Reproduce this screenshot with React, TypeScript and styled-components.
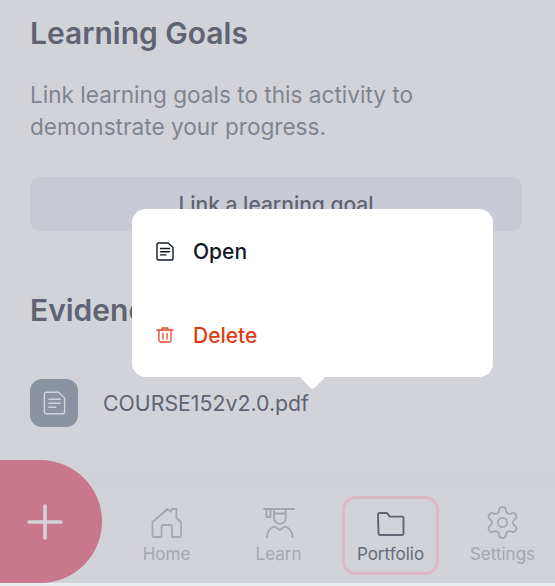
import styled, { createGlobalStyle } from 'styled-components'

const GlobalStyle = createGlobalStyle`
  html, body {
    margin: 0;
    padding: 0;
    background: #e9eef1;
    font-family: Inter, "Noto Sans", sans-serif;
  }
`

const Screen = styled.div`
  position: relative;
  width: 555px;
  height: 586px;
  overflow: hidden;
  background: #e9eef1;
`

const Dimmed = styled.div`
  height: 583px;
  display: flex;
  flex-direction: column;
  background: linear-gradient(#d2d3d9 0, #d2d3d9 450px, #cfd0d5 487px, #d2d3d9 488px);
`

const Content = styled.main`
  flex: 1;
  padding: 14px 33px 0 30px;
`

const Heading = styled.h2`
  margin: 0;
  font-size: 30px;
  line-height: 38px;
  font-weight: 600;
  color: #5f6372;
`

const Intro = styled.p`
  margin: 27px 0 0;
  font-size: 22.6px;
  line-height: 32px;
  color: #80848f;
`

const LinkButton = styled.div`
  margin-top: 34px;
  height: 54px;
  display: flex;
  align-items: center;
  justify-content: center;
  border-radius: 10px;
  background: #c9cbd4;
  font-size: 21px;
  font-weight: 500;
  color: #5f6372;
`

const EvidenceHeading = styled(Heading)`
  margin-top: 60px;
`

const FileRow = styled.div`
  margin-top: 50px;
  display: flex;
  align-items: center;
  gap: 25px;
`

const FileTile = styled.div`
  width: 48px;
  height: 48px;
  display: flex;
  align-items: center;
  justify-content: center;
  border-radius: 12px;
  background: #8b92a0;
`

const FileName = styled.span`
  font-size: 21.3px;
  color: #5f6372;
`

const Nav = styled.nav`
  height: 95px;
  display: flex;
  gap: 15px;
  padding: 8px 0 8px 118px;
  box-sizing: border-box;
`

const NavItem = styled.div<{ $active?: boolean }>`
  width: 97px;
  display: flex;
  flex-direction: column;
  align-items: center;
  gap: 5px;
  padding-top: 7px;
  box-sizing: border-box;
  border-radius: 14px;
  border: 3px solid ${({ $active }) => ($active ? '#dcb9c5' : 'transparent')};
  font-size: 17px;
  line-height: 22px;
  color: ${({ $active }) => ($active ? '#666a79' : '#a4a6b0')};
`

const NavIcon = styled.div`
  width: 32px;
  height: 32px;
  display: flex;
  align-items: center;
  justify-content: center;
`

const Fab = styled.div`
  position: absolute;
  left: 0;
  top: 460px;
  width: 102px;
  height: 123px;
  padding-left: 27px;
  box-sizing: border-box;
  display: flex;
  align-items: center;
  border-radius: 0 62px 62px 0;
  background: #c9778c;
`

const Popover = styled.div`
  position: absolute;
  left: 132px;
  top: 209px;
  width: 361px;
  height: 168px;
  padding: 0 24px;
  box-sizing: border-box;
  display: flex;
  flex-direction: column;
  border-radius: 14px;
  background: #fff;

  &::after {
    content: '';
    position: absolute;
    left: 171px;
    bottom: -9px;
    width: 19px;
    height: 19px;
    border-radius: 3px;
    background: #fff;
    transform: rotate(45deg);
  }
`

const MenuItem = styled.div<{ $danger?: boolean }>`
  flex: 1;
  display: flex;
  align-items: center;
  gap: 19px;
  font-size: 21px;
  font-weight: 500;
  color: ${({ $danger }) => ($danger ? '#e03c12' : '#111827')};
`

// 18x19 sheet with the top right corner cut off
const DocIcon = ({ color, width, height, sw }: { color: string; width: number; height: number; sw: number }) => (
  <svg width={width} height={height} viewBox="0 0 18 19" fill="none" stroke={color} strokeWidth={sw} strokeLinecap="round" strokeLinejoin="round">
    <path d="M1 2.500C1 1.600 1.600 1 2.500 1h9.700L17 5.500v11c0 .9-.6 1.500-1.500 1.500h-13c-.9 0-1.500-.6-1.500-1.500z" />
    <path d="M4.500 6.500h9M4.500 9.700h9M4.500 12.900h5.500" />
  </svg>
)

const TrashIcon = () => (
  <svg width="18" height="16" viewBox="0 0 18 16" fill="none" stroke="#e5482a" strokeWidth="1.300" strokeLinecap="round" strokeLinejoin="round">
    <path d="M1 3h16M6 3V1.500c0-.3.200-.5.500-.5h5c.3 0 .5.200.5.500V3" />
    <path d="M3 3v10.500c0 .9.600 1.500 1.500 1.500h9c.9 0 1.500-.6 1.500-1.500V3" />
    <path d="M7 6.500v5.500M11 6.500v5.500" />
  </svg>
)

const HomeIcon = () => (
  <svg width="32" height="32" viewBox="0 0 32 32" fill="none" stroke="#a4a6b0" strokeWidth="1.800" strokeLinecap="round" strokeLinejoin="round">
    <path d="M1.500 16 16.500 3l3.500 2.700L21 3h4.500v9l4.500 4v13.500c0 1-.5 1.500-1.500 1.500H21V20.500c0-1-.5-1.500-1.500-1.500H12c-1 0-1.500.5-1.500 1.500V31H3c-1 0-1.500-.5-1.500-1.500z" />
  </svg>
)

const LearnIcon = () => (
  <svg width="32" height="32" viewBox="0 0 32 32" fill="none" stroke="#a4a6b0" strokeWidth="1.800" strokeLinecap="round" strokeLinejoin="round">
    <path d="M1 3h30" />
    <path d="M3.500 3v8h4V3" />
    <path d="M11 3v9a5.800 5.800 0 0 0 11.700 0V3M11 7.500h11.700" />
    <path d="M4 32c0-6 3-10 7.500-11.500l5.300 3.500 5.300-3.500C26.600 22 29.600 26 29.600 32" />
  </svg>
)

const FolderIcon = () => (
  <svg width="32" height="32" viewBox="0 0 32 32" fill="none" stroke="#5f6372" strokeWidth="1.900" strokeLinecap="round" strokeLinejoin="round">
    <path d="M3 8.500C3 7.600 3.600 7 4.500 7h6.800c.5 0 .9.200 1.200.6l2.300 3h12.200c.9 0 1.500.6 1.500 1.500v15.400c0 .9-.6 1.500-1.500 1.500h-22c-.9 0-1.500-.6-1.500-1.500z" />
  </svg>
)

const GearIcon = () => (
  <svg width="37" height="37" viewBox="0 0 24 24" fill="none" stroke="#a4a6b0" strokeWidth="1.150" strokeLinecap="round" strokeLinejoin="round" style={{ flex: 'none' }}>
    <path d="M12.220 2h-.44a2 2 0 0 0-2 2v.18a2 2 0 0 1-1 1.730l-.43.25a2 2 0 0 1-2 0l-.15-.08a2 2 0 0 0-2.730.73l-.22.38a2 2 0 0 0 .73 2.730l.15.1a2 2 0 0 1 1 1.720v.51a2 2 0 0 1-1 1.740l-.15.09a2 2 0 0 0-.73 2.730l.22.38a2 2 0 0 0 2.730.73l.15-.08a2 2 0 0 1 2 0l.43.25a2 2 0 0 1 1 1.730V20a2 2 0 0 0 2 2h.44a2 2 0 0 0 2-2v-.18a2 2 0 0 1 1-1.730l.43-.25a2 2 0 0 1 2 0l.15.08a2 2 0 0 0 2.730-.73l.22-.39a2 2 0 0 0-.73-2.730l-.15-.08a2 2 0 0 1-1-1.740v-.5a2 2 0 0 1 1-1.740l.15-.09a2 2 0 0 0 .73-2.730l-.22-.38a2 2 0 0 0-2.730-.73l-.15.08a2 2 0 0 1-2 0l-.43-.25a2 2 0 0 1-1-1.730V4a2 2 0 0 0-2-2z" />
    <circle cx="12" cy="12" r="3" />
  </svg>
)

const PlusIcon = () => (
  <svg width="36" height="36" viewBox="0 0 36 36" fill="none" stroke="#d2d3d9" strokeWidth="3.500" strokeLinecap="round">
    <path d="M18 2v32M2 18h32" />
  </svg>
)

const App = () => {
  return (
    <Screen>
      <GlobalStyle />
      <Dimmed>
        <Content>
          <Heading>Learning Goals</Heading>
          <Intro>Link learning goals to this activity to demonstrate your progress.</Intro>
          <LinkButton>Link a learning goal</LinkButton>
          <EvidenceHeading>Evidence</EvidenceHeading>
          <FileRow>
            <FileTile>
              <DocIcon color="#d2d3d9" width={23} height={24} sw={1.100} />
            </FileTile>
            <FileName>COURSE152v2.0.pdf</FileName>
          </FileRow>
        </Content>
        <Nav>
          <NavItem>
            <NavIcon>
              <HomeIcon />
            </NavIcon>
            Home
          </NavItem>
          <NavItem>
            <NavIcon>
              <LearnIcon />
            </NavIcon>
            Learn
          </NavItem>
          <NavItem $active>
            <NavIcon>
              <FolderIcon />
            </NavIcon>
            Portfolio
          </NavItem>
          <NavItem>
            <NavIcon>
              <GearIcon />
            </NavIcon>
            Settings
          </NavItem>
        </Nav>
      </Dimmed>
      <Fab>
        <PlusIcon />
      </Fab>
      <Popover>
        <MenuItem>
          <DocIcon color="#111827" width={18} height={19} sw={1.400} />
          Open
        </MenuItem>
        <MenuItem $danger>
          <TrashIcon />
          Delete
        </MenuItem>
      </Popover>
    </Screen>
  )
}

export default App
